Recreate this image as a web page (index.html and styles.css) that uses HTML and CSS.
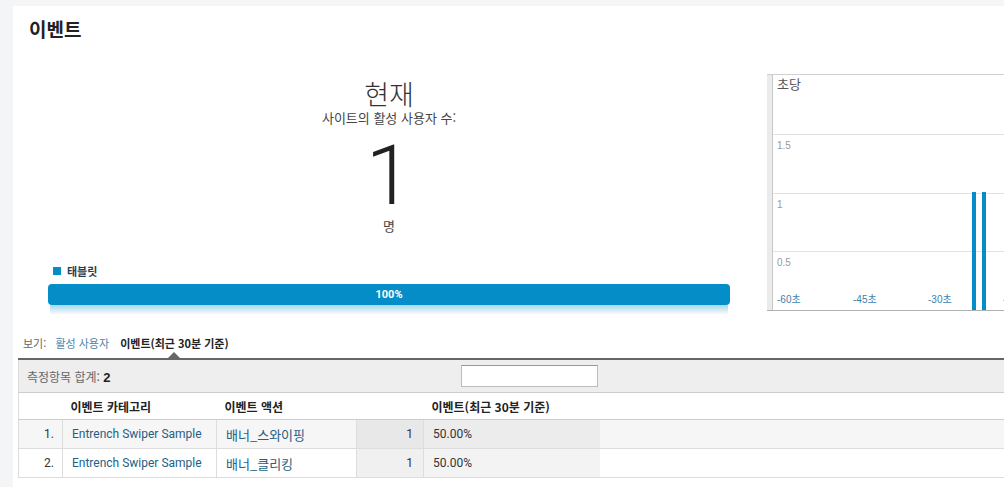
FILE: index.html
```html
<!DOCTYPE html>
<html lang="ko">
<head>
  <meta charset="UTF-8" />
  <meta name="viewport" content="width=device-width, initial-scale=1.0"/>
  <title>이벤트</title>
  <link rel="stylesheet" href="styles.css">
</head>
<body>

<div class="panel">
  <h2 class="title">이벤트</h2>

  <!-- Overview: active users + per-second chart -->
  <div class="overview">
    <div class="now">
      <div class="now-label">현재</div>
      <div class="now-sub">사이트의 활성 사용자 수:</div>
      <div class="now-count">1</div>
      <div class="now-unit">명</div>

      <div class="legend"><span class="swatch"></span>태블릿</div>
      <div class="device-bar">100%</div>
      <div class="device-bar-shine"></div>
    </div>

    <div class="chart">
      <svg width="240" height="240" viewBox="0 0 240 240">
        <rect x="0" y="1" width="5" height="237" fill="#ebebeb"/>
        <line x1="5.5" y1="1" x2="5.5" y2="238" stroke="#c8c8c8"/>
        <line x1="0" y1="1.5" x2="240" y2="1.5" stroke="#d0d0d0"/>
        <line x1="6" y1="61.5" x2="240" y2="61.5" stroke="#e2e2e2"/>
        <line x1="6" y1="120.5" x2="240" y2="120.5" stroke="#e2e2e2"/>
        <line x1="6" y1="178.5" x2="240" y2="178.5" stroke="#e2e2e2"/>
        <line x1="0" y1="237.5" x2="240" y2="237.5" stroke="#b0b0b0"/>

        <text class="c-title" x="10" y="16">초당</text>
        <text class="c-y" x="10" y="76">1.5</text>
        <text class="c-y" x="10" y="135">1</text>
        <text class="c-y" x="10" y="193">0.5</text>

        <text class="c-x" x="10" y="230">-60초</text>
        <text class="c-x" x="86" y="230">-45초</text>
        <text class="c-x" x="161" y="230">-30초</text>
        <text class="c-x" x="236" y="230">-15초</text>

        <rect x="205" y="119" width="4" height="118" fill="#058dc7"/>
        <rect x="215" y="119" width="4" height="118" fill="#058dc7"/>
      </svg>
    </div>
  </div>

  <!-- View switch -->
  <div class="views">
    <span class="views-label">보기:</span>
    <a class="view-link">활성 사용자</a>
    <span class="view-active">이벤트(최근 30분 기준)</span>
  </div>

  <div class="report">
    <div class="toolbar">
      <div class="toolbar-total">측정항목 합계: <b>2</b></div>
      <input type="text" class="filter">
    </div>

    <table class="grid">
      <colgroup>
        <col style="width: 44px">
        <col style="width: 154px">
        <col style="width: 140px">
        <col style="width: 67px">
        <col style="width: 176px">
        <col>
      </colgroup>
      <thead>
        <tr>
          <th></th>
          <th>이벤트 카테고리</th>
          <th>이벤트 액션</th>
          <th></th>
          <th>이벤트(최근 30분 기준)</th>
          <th></th>
        </tr>
      </thead>
      <tbody>
        <tr>
          <td class="no">1.</td>
          <td><a>Entrench Swiper Sample</a></td>
          <td><a class="ko">배너_스와이핑</a></td>
          <td class="count">1</td>
          <td class="pct">50.00%</td>
          <td></td>
        </tr>
        <tr>
          <td class="no">2.</td>
          <td><a>Entrench Swiper Sample</a></td>
          <td><a class="ko">배너_클리킹</a></td>
          <td class="count">1</td>
          <td class="pct">50.00%</td>
          <td></td>
        </tr>
      </tbody>
    </table>
  </div>
</div>

</body>
</html>
```

FILE: styles.css
```css
body {
  margin: 0;
  font-family: Roboto, "Noto Sans CJK KR", sans-serif;
  background: #f4f5f7;
  color: #333;
  overflow: hidden;
}

.panel {
  margin: 6px 0 0 13px;
  background: #fff;
  height: 490px;
}

.title {
  margin: 0;
  padding: 9px 16px 0;
  font-family: "Noto Sans CJK KR", sans-serif;
  font-size: 19px;
  line-height: 28px;
  font-weight: bold;
  color: #222;
}

.overview {
  display: flex;
  margin-top: 31px;
}

.now {
  flex: none;
  width: 682px;
  margin-left: 35px;
  text-align: center;
}

.now-label {
  margin-top: 4px;
  font-family: "Noto Sans CJK KR", sans-serif;
  font-size: 27px;
  line-height: 32px;
  font-weight: 300;
  color: #333;
}

.now-sub,
.now-unit {
  font-family: "Noto Sans CJK KR", sans-serif;
  font-size: 13px;
  line-height: 16px;
  color: #444;
}

.now-count {
  margin-top: 8px;
  font-size: 84px;
  line-height: 84px;
  font-weight: 300;
  color: #222;
}

.legend {
  margin-top: 29px;
  padding-left: 5px;
  text-align: left;
  font-family: "Noto Sans CJK KR", sans-serif;
  font-size: 11px;
  line-height: 16px;
  font-weight: bold;
  color: #2a3e52;
  display: flex;
  align-items: center;
}

.swatch {
  width: 8px;
  height: 8px;
  background: #058dc7;
  margin-right: 6px;
}

.device-bar {
  margin-top: 5px;
  height: 21px;
  line-height: 21px;
  background: #058dc7;
  border-radius: 4px;
  color: #fff;
  font-size: 11px;
  font-weight: bold;
}

.device-bar-shine {
  height: 10px;
  margin: 0 2px;
  background: linear-gradient(rgba(5, 141, 199, 0.35), rgba(5, 141, 199, 0));
}

.chart {
  flex: none;
  margin-left: 37px;
  margin-top: -1px;
}

.chart svg {
  display: block;
}

.c-title {
  font-family: "Noto Sans CJK KR", sans-serif;
  font-size: 13px;
  fill: #555;
}

.c-y {
  font-family: "Liberation Sans", sans-serif;
  font-size: 10px;
  fill: #999;
}

.c-x {
  font-family: "Liberation Sans", "Noto Sans CJK KR", sans-serif;
  font-size: 10px;
  fill: #3d7fb0;
}

.views {
  height: 23px;
  padding: 20px 0 0 10px;
  font-family: "Noto Sans CJK KR", sans-serif;
  font-size: 11px;
  line-height: 16px;
}

.views-label {
  color: #666;
  margin-right: 6px;
}

.view-link {
  color: #4f86ad;
  margin-right: 8px;
}

.view-active {
  position: relative;
  display: inline-block;
  font-weight: bold;
  color: #222;
}

/* small pointer under the selected view */
.view-active::after {
  content: "";
  position: absolute;
  left: 50%;
  top: 17px;
  margin-left: -6px;
  border: 6px solid transparent;
  border-top: 0;
  border-bottom-color: #666;
}

.report {
  margin-left: 5px;
  border-top: 2px solid #666;
}

.toolbar {
  display: flex;
  align-items: center;
  height: 32px;
  background: #eee;
  border-bottom: 1px solid #ccc;
  border-left: 1px solid #ddd;
}

.toolbar-total {
  width: 434px;
  padding-left: 8px;
  font-family: "Noto Sans CJK KR", sans-serif;
  font-size: 12px;
  color: #666;
}

.toolbar-total b {
  color: #222;
  font-family: "Liberation Sans", sans-serif;
  font-size: 13px;
}

.filter {
  width: 137px;
  height: 22px;
  box-sizing: border-box;
  margin: 0;
  border: 1px solid #bbb;
  border-top-color: #999;
  background: #fff;
}

.grid {
  width: 100%;
  table-layout: fixed;
  border-collapse: collapse;
  border-left: 1px solid #ddd;
}

.grid th {
  height: 26px;
  padding: 0 8px;
  text-align: left;
  font-family: "Noto Sans CJK KR", sans-serif;
  font-size: 12px;
  font-weight: bold;
  color: #222;
  border-bottom: 1px solid #ccc;
}

.grid td {
  height: 28px;
  padding: 0 9px;
  font-size: 12px;
  color: #333;
  border-bottom: 1px solid #ddd;
  border-right: 1px solid #ddd;
  white-space: nowrap;
}

.grid td:nth-child(5),
.grid td:nth-child(6) {
  border-right: 0;
}

.grid tbody tr:nth-child(odd) td {
  background: #f6f6f6;
}

.grid tbody tr:nth-child(odd) td.count {
  background: #e8e8e8;
}

.grid tbody tr:nth-child(odd) td.pct {
  background: #ececec;
}

.grid tbody tr:nth-child(even) td.count {
  background: #f0f0f0;
}

.grid tbody tr:nth-child(even) td.pct {
  background: #f3f3f3;
}

.grid td.no {
  text-align: right;
  padding-right: 8px;
}

.grid td.count {
  text-align: right;
  padding-right: 10px;
}

.grid a {
  color: #245f86;
}

.grid a.ko {
  font-family: "Noto Sans CJK KR", sans-serif;
  font-size: 13px;
}
```
